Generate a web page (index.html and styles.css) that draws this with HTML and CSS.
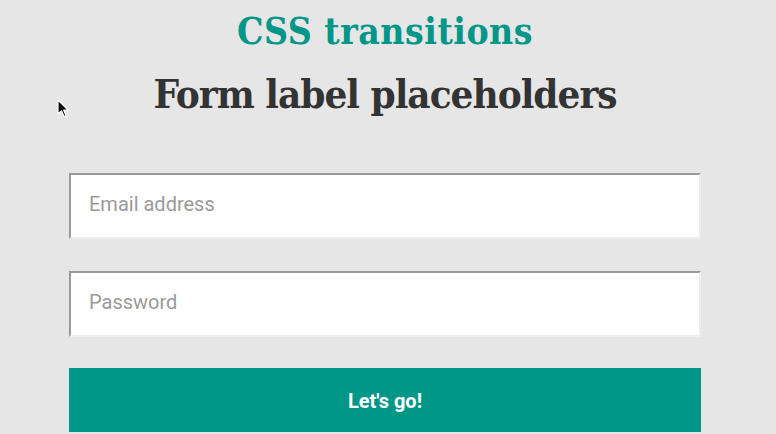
FILE: index.html
```html
<!DOCTYPE html>
<html>
<head>
<meta charset="utf-8">
<link rel="stylesheet" href="styles.css">
</head>
<body>
<div class="page">
  <h1 class="kicker">CSS transitions</h1>
  <h2 class="title">Form label placeholders</h2>
  <form class="form">
    <div class="field"><span class="ph">Email address</span></div>
    <div class="field"><span class="ph">Password</span></div>
    <div class="btn">Let's go!</div>
  </form>
</div>
<svg class="cursor" width="12" height="19" viewBox="0 0 12 19">
  <path d="M1 1 L1 15 L4.5 11.8 L7 17.5 L9 16.6 L6.6 11 L11 11 Z" fill="#000" stroke="#fff" stroke-width="1.2" stroke-linejoin="round"/>
</svg>
</body>
</html>
```
FILE: styles.css
```css
html, body { margin: 0; padding: 0; }
body {
  background: #e6e6e6;
  width: 776px;
  height: 434px;
  overflow: hidden;
  position: relative;
}
.page {
  width: 632px;
  margin-left: 69px;
  display: flex;
  flex-direction: column;
}
.kicker {
  margin: 9px 0 0 0;
  text-align: center;
  font-family: "DejaVu Serif Condensed", "DejaVu Serif", serif;
  font-stretch: condensed;
  font-weight: bold;
  font-size: 37px;
  line-height: 44px;
  color: #009688;
  letter-spacing: 0.5px;
}
.title {
  margin: 17px 0 0 0;
  text-align: center;
  font-family: "DejaVu Serif Condensed", "DejaVu Serif", serif;
  font-stretch: condensed;
  font-weight: bold;
  font-size: 40px;
  line-height: 48px;
  color: #333333;
  letter-spacing: -1px;
}
.form {
  margin-top: 55px;
  display: flex;
  flex-direction: column;
  gap: 32px;
}
.field {
  box-sizing: border-box;
  height: 66px;
  background: #fff;
  border-top: 2px solid #9a9a9a;
  border-left: 2px solid #9a9a9a;
  border-right: 2px solid #eeeeee;
  border-bottom: 2px solid #eeeeee;
  padding: 17px 0 0 18px;
}
.ph {
  font-family: Roboto, "Liberation Sans", sans-serif;
  font-size: 20px;
  line-height: 24px;
  color: #9a9a9a;
}
.btn {
  margin-top: -1px;
  height: 64px;
  background: #009688;
  color: #fff;
  font-family: Roboto, "Liberation Sans", sans-serif;
  font-weight: bold;
  font-size: 20px;
  display: flex;
  align-items: center;
  justify-content: center;
  padding-top: 1px;
  box-sizing: border-box;
}
.cursor {
  position: absolute;
  left: 57px;
  top: 99px;
}
```
